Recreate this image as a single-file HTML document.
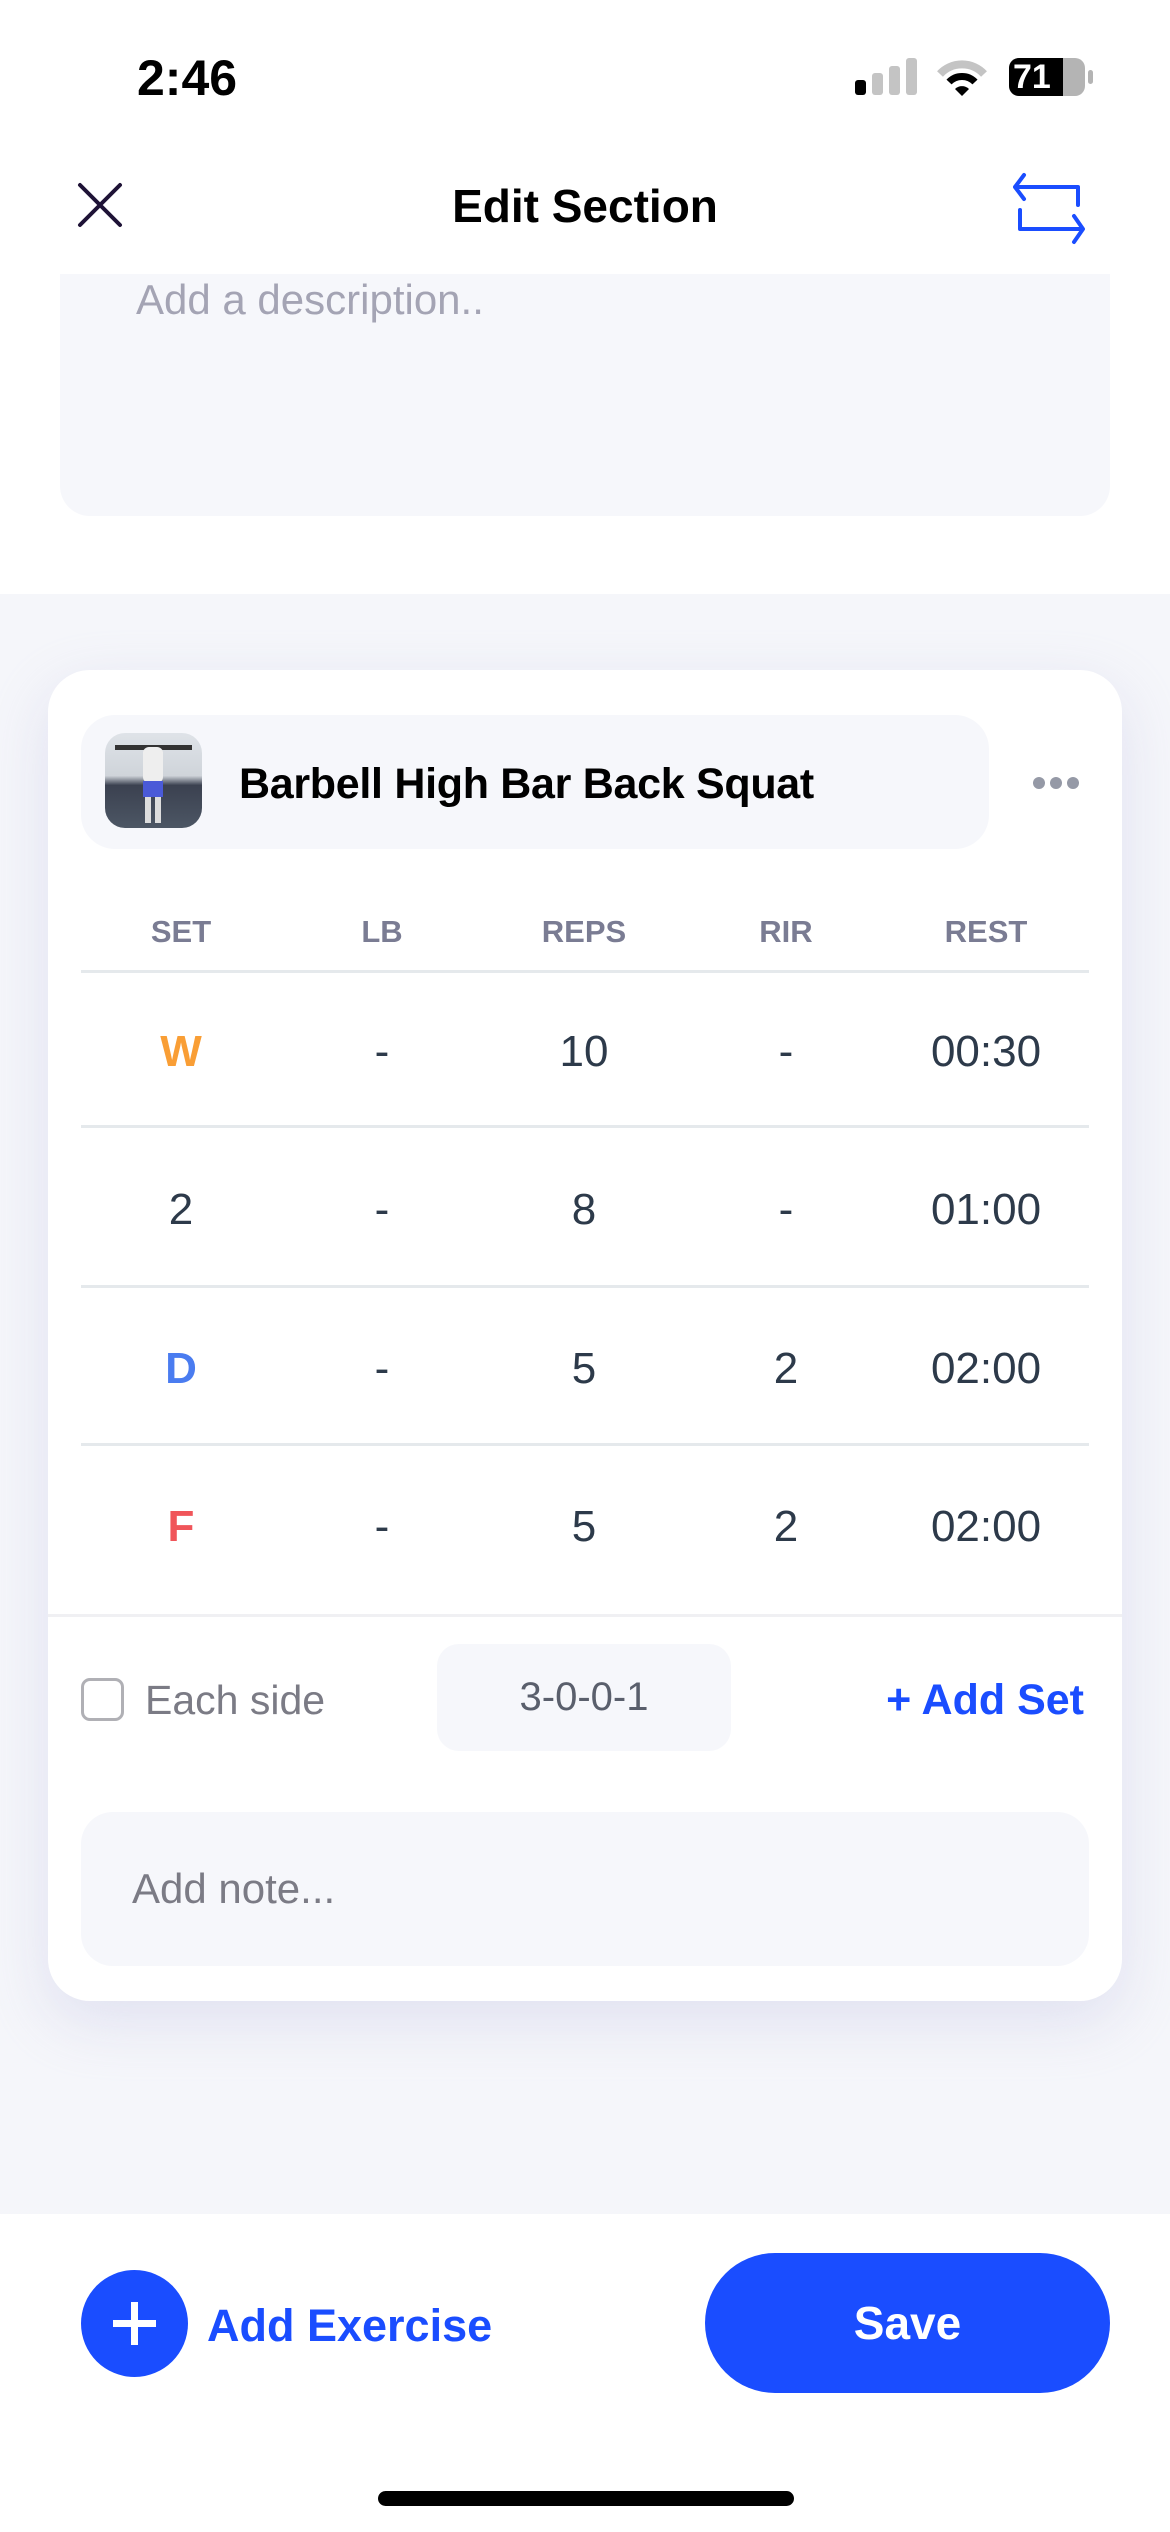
<!DOCTYPE html>
<html><head><meta charset="utf-8"><style>
*{box-sizing:border-box;margin:0;padding:0}
body{width:1170px;height:2532px;position:relative;background:#fff;font-family:"Liberation Sans",sans-serif;overflow:hidden}
.a{position:absolute}
.col{position:absolute;width:200px;text-align:center;transform:translateX(-100px)}
.hd{top:912px;font-size:31px;font-weight:bold;color:#7a7c93;line-height:40px}
.v{font-size:44px;color:#2d3a4a;line-height:56px}
.ln{position:absolute;left:81px;width:1008px;height:3px;background:#e5e9ec}
</style></head><body>
<div class="a" style="left:137px;top:48px;font-size:50px;font-weight:bold;color:#000;line-height:60px">2:46</div>
<div class="a" style="left:855px;top:80px;width:11px;height:15px;background:#000;border-radius:3px"></div>
<div class="a" style="left:872px;top:73px;width:11px;height:22px;background:#c4c4c4;border-radius:3px"></div>
<div class="a" style="left:889px;top:66px;width:11px;height:29px;background:#c4c4c4;border-radius:3px"></div>
<div class="a" style="left:906px;top:58px;width:11px;height:37px;background:#c4c4c4;border-radius:3px"></div>
<svg class="a" style="left:936px;top:58px" width="52" height="40" viewBox="0 0 52 40"><path d="M4 16 A30 30 0 0 1 48 16" stroke="#c4c4c4" stroke-width="8" fill="none"/><path d="M13 24 A18 18 0 0 1 39 24" stroke="#000" stroke-width="7" fill="none"/><path d="M19 31 L26 38 L33 31 A10 10 0 0 0 19 31Z" fill="#000"/></svg>
<div class="a" style="left:1009px;top:58px;width:76px;height:38px;border-radius:10px;background:#b4b4b4;overflow:hidden"><div style="width:54px;height:38px;background:#000"></div></div>
<div class="a" style="left:1088px;top:70px;width:5px;height:14px;border-radius:3px;background:#b4b4b4"></div>
<div class="a" style="left:1013px;top:56px;font-size:34px;font-weight:bold;color:#fff;line-height:42px">71</div>
<svg class="a" style="left:77px;top:182px" width="46" height="46"><path d="M3 3L43 43M43 3L3 43" stroke="#1e1236" stroke-width="4" stroke-linecap="round"/></svg>
<div class="a" style="left:0;width:1170px;top:178px;text-align:center;font-size:46px;font-weight:bold;color:#000;line-height:56px">Edit Section</div>
<svg class="a" style="left:1010px;top:170px" width="80" height="76" viewBox="0 0 80 76"><path d="M14 5L5 17L14 29M5 17H68V35M10 40V59H72M64 46L73 59L64 72" stroke="#1a4dff" stroke-width="4" fill="none" stroke-linejoin="round" stroke-linecap="round"/></svg>
<div class="a" style="left:60px;top:274px;width:1050px;height:242px;background:#f6f7fb;border-radius:0 0 30px 30px"></div>
<div class="a" style="left:136px;top:274px;font-size:42px;color:#a4a4b4;line-height:52px">Add a description..</div>
<div class="a" style="left:0;top:594px;width:1170px;height:1620px;background:#f5f6fa"></div>
<div class="a" style="left:48px;top:670px;width:1074px;height:1331px;background:#fff;border-radius:42px;box-shadow:0 20px 60px rgba(200,200,230,.45)"></div>
<div class="a" style="left:81px;top:715px;width:908px;height:134px;background:#f6f7fb;border-radius:34px"></div>
<div class="a" style="left:105px;top:733px;width:97px;height:95px;border-radius:20px;overflow:hidden;background:linear-gradient(#dfe3e8 0%,#cfd4da 45%,#3b4150 55%,#4c5664 100%)">
<div style="position:absolute;left:10px;top:12px;width:77px;height:5px;background:#333"></div>
<div style="position:absolute;left:38px;top:14px;width:20px;height:36px;background:#eee;border-radius:6px"></div>
<div style="position:absolute;left:38px;top:48px;width:20px;height:16px;background:#4a5ad8"></div>
<div style="position:absolute;left:40px;top:64px;width:6px;height:26px;background:#ddd"></div>
<div style="position:absolute;left:50px;top:64px;width:6px;height:26px;background:#ddd"></div>
</div>
<div class="a" style="left:239px;top:758px;font-size:43px;font-weight:bold;color:#000;line-height:52px;letter-spacing:-0.3px">Barbell High Bar Back Squat</div>
<div class="a" style="left:1033px;top:777px;width:12px;height:12px;border-radius:50%;background:#9599a6"></div>
<div class="a" style="left:1050px;top:777px;width:12px;height:12px;border-radius:50%;background:#9599a6"></div>
<div class="a" style="left:1067px;top:777px;width:12px;height:12px;border-radius:50%;background:#9599a6"></div>
<div class="col hd" style="left:181px">SET</div>
<div class="col hd" style="left:382px">LB</div>
<div class="col hd" style="left:584px">REPS</div>
<div class="col hd" style="left:786px">RIR</div>
<div class="col hd" style="left:986px">REST</div>
<div class="ln" style="top:970px"></div>
<div class="ln" style="top:1125px"></div>
<div class="ln" style="top:1285px"></div>
<div class="ln" style="top:1443px"></div>
<div class="col v" style="left:181px;top:1024px;color:#f99e35;font-weight:bold">W</div>
<div class="col v" style="left:382px;top:1024px">-</div>
<div class="col v" style="left:584px;top:1024px">10</div>
<div class="col v" style="left:786px;top:1024px">-</div>
<div class="col v" style="left:986px;top:1024px">00:30</div>
<div class="col v" style="left:181px;top:1182px">2</div>
<div class="col v" style="left:382px;top:1182px">-</div>
<div class="col v" style="left:584px;top:1182px">8</div>
<div class="col v" style="left:786px;top:1182px">-</div>
<div class="col v" style="left:986px;top:1182px">01:00</div>
<div class="col v" style="left:181px;top:1341px;color:#4a7cf0;font-weight:bold">D</div>
<div class="col v" style="left:382px;top:1341px">-</div>
<div class="col v" style="left:584px;top:1341px">5</div>
<div class="col v" style="left:786px;top:1341px">2</div>
<div class="col v" style="left:986px;top:1341px">02:00</div>
<div class="col v" style="left:181px;top:1499px;color:#f0555a;font-weight:bold">F</div>
<div class="col v" style="left:382px;top:1499px">-</div>
<div class="col v" style="left:584px;top:1499px">5</div>
<div class="col v" style="left:786px;top:1499px">2</div>
<div class="col v" style="left:986px;top:1499px">02:00</div>
<div class="a" style="left:48px;top:1614px;width:1074px;height:3px;background:#f0f0f3"></div>
<div class="a" style="left:81px;top:1678px;width:43px;height:43px;border:3px solid #b0b0b5;border-radius:9px"></div>
<div class="a" style="left:145px;top:1675px;font-size:41px;color:#7b7b85;line-height:50px">Each side</div>
<div class="a" style="left:437px;top:1644px;width:294px;height:107px;background:#f6f7fb;border-radius:22px;text-align:center;font-size:40px;color:#5a5f6c;line-height:107px">3-0-0-1</div>
<div class="a" style="right:86px;top:1674px;font-size:43px;font-weight:bold;color:#1a4dff;line-height:52px">+ Add Set</div>
<div class="a" style="left:81px;top:1812px;width:1008px;height:154px;background:#f6f7fb;border-radius:32px"></div>
<div class="a" style="left:132px;top:1864px;font-size:42px;color:#7b7b85;line-height:50px">Add note...</div>
<div class="a" style="left:81px;top:2270px;width:107px;height:107px;border-radius:50%;background:#1a4dff"></div>
<div class="a" style="left:113px;top:2320px;width:43px;height:7px;background:#fff"></div>
<div class="a" style="left:131px;top:2302px;width:7px;height:43px;background:#fff"></div>
<div class="a" style="left:207px;top:2298px;font-size:45px;font-weight:bold;color:#1a4dff;line-height:56px">Add Exercise</div>
<div class="a" style="left:705px;top:2253px;width:405px;height:140px;border-radius:70px;background:#1a4dff;text-align:center;color:#fff;font-size:46px;font-weight:bold;line-height:140px">Save</div>
<div class="a" style="left:378px;top:2491px;width:416px;height:15px;border-radius:8px;background:#000"></div>
</body></html>
